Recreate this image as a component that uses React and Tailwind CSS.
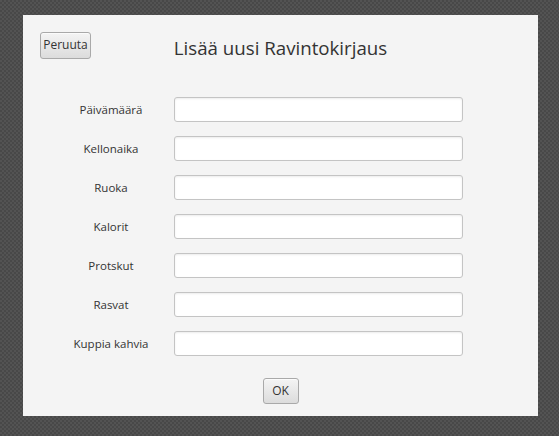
import React from 'react';

const fields = ['Päivämäärä', 'Kellonaika', 'Ruoka', 'Kalorit', 'Protskut', 'Rasvat', 'Kuppia kahvia'];

const btn =
  'border border-[#a9a9a9] rounded-[3px] bg-gradient-to-b from-[#f4f4f4] to-[#dcdcdc] shadow-[inset_0_1px_0_#fbfbfb] text-[12px] text-[#333]';

const App = () => {
  return (
    <div
      className="w-[559px] h-[436px] pt-[15px] pl-[23px] bg-[#4d4d4d] bg-[image:repeating-conic-gradient(#484848_0_25%,#535353_0_50%)] bg-[length:4px_4px]"
      style={{ fontFamily: '"Open Sans", "Noto Sans", sans-serif' }}
    >
      <div className="w-[515px] h-[401px] bg-[#f4f4f4] flex flex-col">
        {/* Header */}
        <div className="grid grid-cols-[1fr_auto_1fr] items-start pt-[16px] px-[17px]">
          <div>
            <button className={`${btn} w-[51px] h-[27px]`}>Peruuta</button>
          </div>
          <h1 className="mt-[5px] text-[18.7px] leading-[24px] text-[#333]">
            Lisää uusi Ravintokirjaus
          </h1>
          <div />
        </div>

        {/* Form */}
        <div className="mt-[37px] pl-[37px] flex flex-col gap-[14px]">
          {fields.map((f) => (
            <div key={f} className="flex items-center gap-[12px]">
              <label className="w-[102px] text-center text-[11.5px] text-[#333]">{f}</label>
              <input
                type="text"
                className="w-[289px] h-[25px] bg-white border border-[#c4c4c4] rounded-[3px] shadow-[inset_0_1px_2px_rgba(0,0,0,0.08)] outline-none px-2 text-[12px]"
              />
            </div>
          ))}
        </div>

        <div className="mt-[22px] flex justify-center">
          <button className={`${btn} w-[36px] h-[26px]`}>OK</button>
        </div>
      </div>
    </div>
  );
};

export default App;
